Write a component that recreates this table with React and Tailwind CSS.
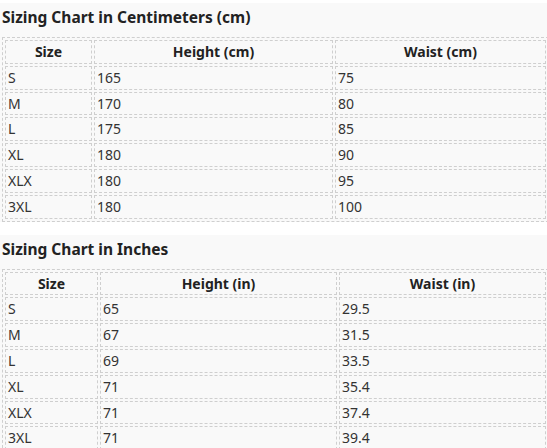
const cmRows = [
  ["S", "165", "75"],
  ["M", "170", "80"],
  ["L", "175", "85"],
  ["XL", "180", "90"],
  ["XLX", "180", "95"],
  ["3XL", "180", "100"],
];

const inRows = [
  ["S", "65", "29.5"],
  ["M", "67", "31.5"],
  ["L", "69", "33.5"],
  ["XL", "71", "35.4"],
  ["XLX", "71", "37.4"],
  ["3XL", "71", "39.4"],
];

function SizeTable({ title, unit, rows, widths }) {
  return (
    <div className="bg-[#f9f9f9]">
      <h2 className="text-[15.5px] font-bold leading-[22px] text-[#222] pl-[2px] pt-[3px] pb-[9px]">
        {title}
      </h2>
      <table
        className="ml-[2px] w-[547px] border border-dashed border-[#cfcfcf] text-[14px] text-[#333]"
        style={{ borderCollapse: "separate", borderSpacing: "2px" }}
      >
        <thead>
          <tr>
            <th className={`${widths[0]} border border-dashed border-[#cfcfcf] font-bold text-center leading-[19.8px] py-[1px] text-[#222]`}>
              Size
            </th>
            <th className={`${widths[1]} border border-dashed border-[#cfcfcf] font-bold text-center leading-[19.8px] py-[1px] text-[#222]`}>
              Height ({unit})
            </th>
            <th className="border border-dashed border-[#cfcfcf] font-bold text-center leading-[19.8px] py-[1px] text-[#222]">
              Waist ({unit})
            </th>
          </tr>
        </thead>
        <tbody>
          {rows.map((r) => (
            <tr key={r[0]}>
              {r.map((c, i) => (
                <td
                  key={i}
                  className="border border-dashed border-[#cfcfcf] text-left leading-[19.8px] py-[1px] px-[2px]"
                >
                  {c}
                </td>
              ))}
            </tr>
          ))}
        </tbody>
      </table>
    </div>
  );
}

export default function App() {
  return (
    <div
      className="min-h-screen bg-white pt-[3px] overflow-hidden"
      style={{ fontFamily: '"Noto Sans", "Open Sans", sans-serif' }}
    >
      <SizeTable
        title="Sizing Chart in Centimeters (cm)"
        unit="cm"
        rows={cmRows}
        widths={["w-[87px]", "w-[239px]"]}
      />
      <div className="h-[13px]" />
      <SizeTable
        title="Sizing Chart in Inches"
        unit="in"
        rows={inRows}
        widths={["w-[93px]", "w-[237px]"]}
      />
    </div>
  );
}
